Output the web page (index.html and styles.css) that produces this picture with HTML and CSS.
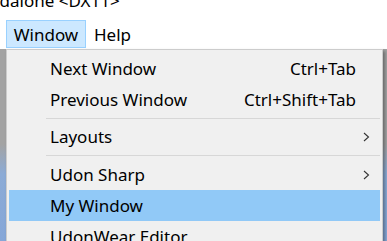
FILE: index.html
```html
<!DOCTYPE html>
<html>
<head>
<meta charset="utf-8">
<link rel="stylesheet" href="styles.css">
</head>
<body>
<div class="titlebar"><div class="title">Standalone &lt;DX11&gt;</div></div>
<nav class="menubar">
  <span class="menu active">Window</span>
  <span class="menu">Help</span>
</nav>
<div class="workspace"></div>
<div class="dropdown">
  <div class="item"><span class="label">Next Window</span><span class="key">Ctrl+Tab</span><span></span></div>
  <div class="item"><span class="label">Previous Window</span><span class="key">Ctrl+Shift+Tab</span><span></span></div>
  <div class="sep"></div>
  <div class="item"><span class="label">Layouts</span><span class="key"></span><svg class="chev" width="7" height="10" viewBox="0 0 7 10"><polyline points="1,1 5.5,5 1,9" fill="none" stroke="#333" stroke-width="1.1"/></svg></div>
  <div class="sep"></div>
  <div class="item"><span class="label">Udon Sharp</span><span class="key"></span><svg class="chev" width="7" height="10" viewBox="0 0 7 10"><polyline points="1,1 5.5,5 1,9" fill="none" stroke="#333" stroke-width="1.1"/></svg></div>
  <div class="item hot"><span class="label">My Window</span><span class="key"></span><span></span></div>
  <div class="item"><span class="label">UdonWear Editor</span><span class="key"></span><span></span></div>
</div>
</body>
</html>
```
FILE: styles.css
```css
html, body {
  margin: 0;
  padding: 0;
  width: 387px;
  height: 241px;
  overflow: hidden;
  background: #ffffff;
  font-family: "Noto Sans", "Open Sans", sans-serif;
  font-size: 16px;
  color: #000;
  position: relative;
}
.titlebar {
  height: 19px;
  overflow: hidden;
  white-space: nowrap;
}
.title {
  margin-left: -36px;
  margin-top: -10px;
  line-height: 22px;
  font-size: 17px;
}
.menubar {
  height: 30px;
  display: flex;
  align-items: flex-start;
  padding-left: 6px;
  box-sizing: border-box;
}
.menu {
  margin-top: 1px;
  height: 28px;
  box-sizing: border-box;
  padding: 0 7px;
  display: flex;
  align-items: center;
  border: 1px solid transparent;
  font-size: 17px;
}
.menu.active {
  background: #cce8ff;
  border-color: #99d1ff;
  width: 80px;
  justify-content: center;
  padding: 0;
}
.workspace {
  height: 192px;
  background: linear-gradient(#a3a3a3 0, #a3a3a3 95px, #8cabd6 125px, #86a7d8 100%);
}
.dropdown {
  position: absolute;
  left: 6px;
  top: 49px;
  width: 377px;
  height: 220px;
  box-sizing: border-box;
  background: #f0f0f0;
  border: 1px solid #cccccc;
  padding: 3px 2px 0 2px;
  box-shadow: 2px 2px 3px rgba(0,0,0,0.35);
}
.item {
  height: 31px;
  display: grid;
  grid-template-columns: 1fr auto 24px;
  align-items: center;
  padding-left: 41px;
  font-size: 17px;
}
.item.hot {
  background: #91c9f7;
}
.key {
  text-align: right;
}
.chev {
  justify-self: start;
  margin-left: 7px;
}
.sep {
  height: 6px;
  box-sizing: border-box;
  padding-top: 3px;
  margin-left: 37px;
}
.sep + .item + .sep {
  height: 7px;
}
.sep::after {
  content: "";
  display: block;
  height: 1px;
  background: #d7d7d7;
}
```
